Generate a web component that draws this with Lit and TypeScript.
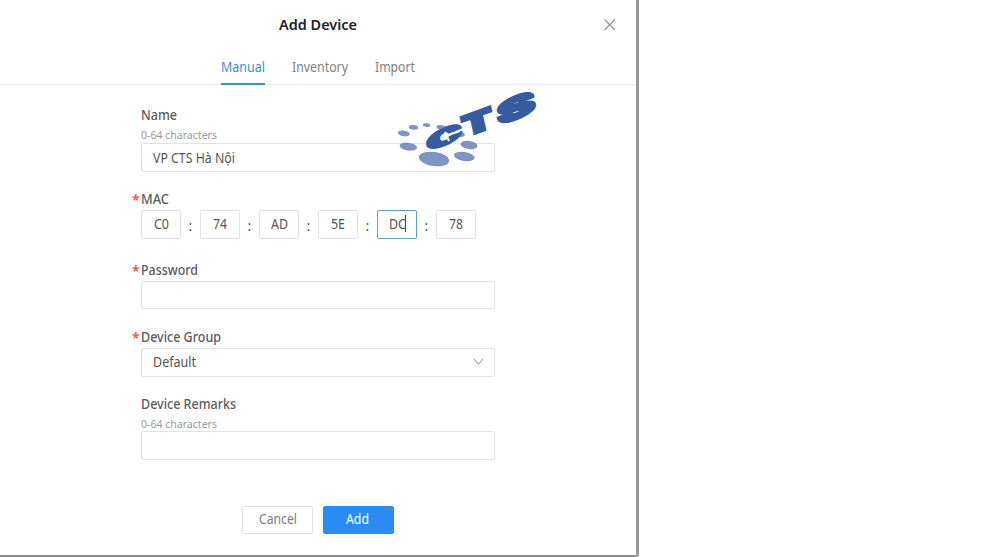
import { LitElement, html, css, svg } from "lit";
import { customElement } from "lit/decorators.js";

@customElement("app-root")
export class AppRoot extends LitElement {
  static styles = css`
    :host { display: block; width: 991px; height: 557px; overflow: hidden; background: #fff; font: 14px/18px "Noto Sans", "Open Sans", sans-serif; color: #555; }
    * { box-sizing: border-box; }
    svg { display: block; }
    .dialog { position: relative; width: 639px; height: 557px; border-right: 3px solid #98989b; border-bottom: 2px solid #8e8e90; border-bottom-right-radius: 3px; }
    header { display: grid; height: 50px; place-items: center; }
    h1 { margin: 0; font-size: 14.5px; line-height: 20px; font-weight: 600; color: #222; }
    .close { position: absolute; left: 603px; top: 18px; }
    nav { display: flex; justify-content: center; gap: 27px; height: 35px; border-bottom: 1px solid #e6e8ea; padding-top: 7px; color: #808080; }
    .tab { height: 28px; padding-top: 1px; }
    .on { color: #3b8fd6; border-bottom: 2px solid #3b8fd6; }
    form { width: 354px; margin-left: 141px; padding-top: 21px; display: flex; flex-direction: column; }
    .field { display: flex; flex-direction: column; }
    .label { display: flex; height: 19px; line-height: 19px; font-weight: 500; color: #5c5c5c; }
    .req { margin-left: -9px; }
    .star { width: 9px; color: #e8553e; font-weight: 600; line-height: 20px; }
    .hint { height: 18px; font-size: 11.5px; color: #999; }
    .input { display: flex; align-items: center; justify-content: space-between; height: 29px; border: 1px solid #e1e2e4; border-radius: 2px; padding: 0 10px 0 11px; font-size: 13.5px; color: #555; }
    .name { height: 84px; }
    .mac { height: 71px; }
    .password { height: 67px; }
    .group { height: 67px; }
    .password .label, .group .label { height: 20px; }
    .mac .label { height: 20px; }
    .remarks .hint { height: 17px; }
    .group .input { padding-bottom: 2px; }
    .password .input { height: 28px; }
    .octets { display: flex; }
    .octet { width: 40px; height: 29px; border: 1px solid #e1e2e4; border-radius: 2px; display: flex; align-items: center; justify-content: center; font-size: 13.5px; padding-bottom: 2px; }
    .focus { border-color: #5a9fd0; }
    .caret { width: 1px; height: 17px; background: #444; margin-left: -1px; }
    .colon { width: 19px; text-align: center; line-height: 31px; }
    footer { display: flex; justify-content: center; gap: 10px; margin-top: 46px; }
    .btn { width: 71px; height: 28px; border: 1px solid #e1e2e4; border-radius: 1px; display: flex; align-items: center; justify-content: center; font-size: 13.5px; color: #7d7d7d; padding-bottom: 2px; }
    .primary { background: #2a8df4; border-color: #2a8df4; color: #fff; border-radius: 2px; padding-right: 2px; }
    .logo { position: absolute; left: 390px; top: 84px; pointer-events: none; }
    .logo text { font: 900 20px Inter, sans-serif; fill: #365ba0; stroke: #365ba0; stroke-width: 2px; }
  `;

  private fit(text: string, width: number) {
    return html`<svg width=${width} height="18" overflow="visible"><text x="0" y="14" textLength=${width} lengthAdjust="spacingAndGlyphs" fill="currentColor">${text}</text></svg>`;
  }

  render() {
    const dots = [
      [434, 159, 15.3, 7], [408.3, 146.6, 8.8, 4], [403.8, 133.4, 6, 2.8],
      [413.5, 127.4, 4.8, 2.3], [426.5, 125.1, 3.8, 1.8], [441.5, 127.5, 5, 2.3],
      [458, 134, 7, 3], [469, 145, 8.5, 4], [464.3, 156.5, 10.5, 4.5],
    ];
    const widths = [15, 14, 17, 14, 17, 14];
    return html`<div class="dialog">
      <header><h1>${this.fit("Add Device", 78)}</h1></header>
      <svg class="close" width="13" height="13"><path d="M1.5 1.5l10.5 10.5M12 1.5L1.5 12" fill="none" stroke="#93939f" stroke-width="1.2"/></svg>
      <nav><div class="tab on">${this.fit("Manual", 44)}</div><div class="tab">${this.fit("Inventory", 56)}</div><div class="tab">${this.fit("Import", 40)}</div></nav>
      <form>
        <div class="field name"><div class="label">${this.fit("Name", 36)}</div><div class="hint">${this.fit("0-64 characters", 76)}</div><div class="input">${this.fit("VP CTS Hà Nội", 82)}</div></div>
        <div class="field mac"><div class="label req"><span class="star">*</span>${this.fit("MAC", 28)}</div>
          <div class="octets">${["C0", "74", "AD", "5E", "DC", "78"].map((v, i) => html`${i ? html`<span class="colon">:</span>` : ""}<div class="octet ${i === 4 ? "focus" : ""}">${this.fit(v, widths[i])}${i === 4 ? html`<i class="caret"></i>` : ""}</div>`)}</div></div>
        <div class="field password"><div class="label req"><span class="star">*</span>${this.fit("Password", 57)}</div><div class="input"></div></div>
        <div class="field group"><div class="label req"><span class="star">*</span>${this.fit("Device Group", 80)}</div><div class="input">${this.fit("Default", 43)}<svg width="11" height="8"><path d="M1 1l4.5 5L10 1" fill="none" stroke="#999" stroke-width="1.1"/></svg></div></div>
        <div class="field remarks"><div class="label">${this.fit("Device Remarks", 95)}</div><div class="hint">${this.fit("0-64 characters", 76)}</div><div class="input"></div></div>
      </form>
      <footer><div class="btn">${this.fit("Cancel", 38)}</div><div class="btn primary">${this.fit("Add", 23)}</div></footer>
      <svg class="logo" width="155" height="90" viewBox="390 84 155 90">
        ${dots.map(([x, y, rx, ry]) => svg`<ellipse cx=${x} cy=${y} rx=${rx} ry=${ry} transform="rotate(8 ${x} ${y})" fill="#7e94c4"/>`)}
        <text transform="matrix(2.3 -.95 .1 1.1 427.5 152)">C</text>
        <path d="M445 132l4 9M444 137l7 -3 9 -3" fill="none" stroke="#fff" stroke-width="2"/>
        <text transform="matrix(2.15 -.78 .3 1.35 465 137)">T</text>
        <text transform="matrix(2.75 -1.1 .2 1.45 499 125.5)">S</text>
      </svg>
    </div>`;
  }
}
